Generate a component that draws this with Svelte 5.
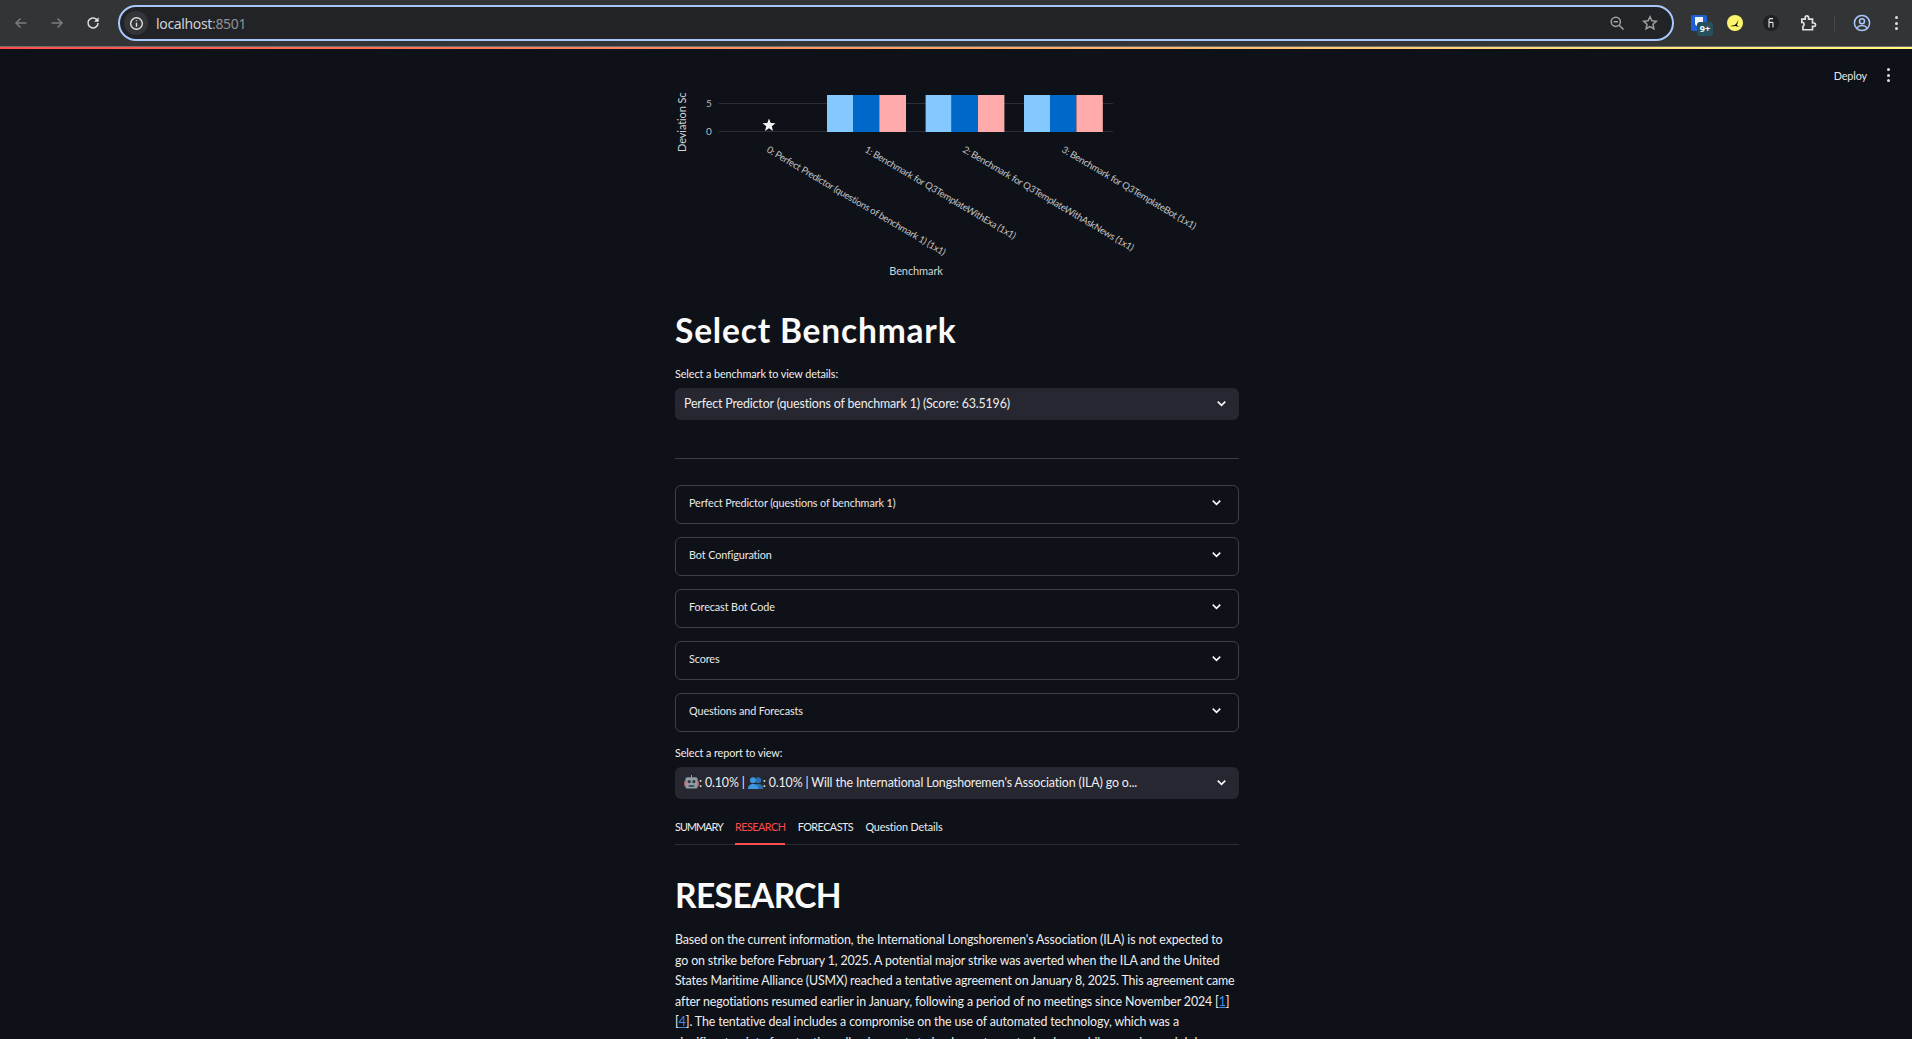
<script>
	const sans = 'Lato';

	const groups = [
		[827, 853, 879.3, 906],
		[925.6, 951.6, 978, 1004.4],
		[1024, 1050, 1076.4, 1102.8]
	];
	const barColors = ['#83c9ff', '#0068c9', '#ffabab'];
	const xLabels = [
		{ x: 766, text: '0: Perfect Predictor (questions of benchmark 1) (1x1)' },
		{ x: 864, text: '1: Benchmark for Q3TemplateWithExa (1x1)' },
		{ x: 962, text: '2: Benchmark for Q3TemplateWithAskNews (1x1)' },
		{ x: 1061, text: '3: Benchmark for Q3TemplateBot (1x1)' }
	];
	const expanders = [
		'Perfect Predictor (questions of benchmark 1)',
		'Bot Configuration',
		'Forecast Bot Code',
		'Scores',
		'Questions and Forecasts'
	];
	const tabs = [
		{ label: 'SUMMARY', cls: 'caps tight' },
		{ label: 'RESEARCH', cls: 'caps' },
		{ label: 'FORECASTS', cls: 'caps' },
		{ label: 'Question Details', cls: '' }
	];
	let activeTab = 1;
</script>

<div class="chrome">
	<div class="nav">
		<svg class="ic dim" viewBox="0 0 16 16"><path d="M13.5 8H3M7.5 3.5 3 8l4.5 4.5" /></svg>
		<svg class="ic dim" viewBox="0 0 16 16"><path d="M2.5 8H13M8.5 3.5 13 8l-4.5 4.5" /></svg>
		<svg class="ic lit" viewBox="0 0 16 16"><path d="M13 8a5 5 0 1 1-1.5-3.6L13 6" /><path class="fill" d="M13.6 2.2v4.6H9z" /></svg>
	</div>
	<div class="omnibox">
		<span class="info">
			<svg class="ic lit small" viewBox="0 0 16 16"><circle cx="8" cy="8" r="6.2" /><path d="M8 7.2V11.5M8 4.4v1.3" /></svg>
		</span>
		<span class="url">localhost<span class="port">:8501</span></span>
		<span class="omni-right">
			<svg class="ic soft" viewBox="0 0 16 16"><circle cx="6.8" cy="6.8" r="4.6" /><path d="M10.2 10.2 14.5 14.5M4.6 6.8h4.4" /></svg>
			<svg class="ic soft" viewBox="0 0 16 16"><path d="m8 1.8 1.9 4 4.4.5-3.3 3 .9 4.4L8 11.5l-3.9 2.2.9-4.4-3.3-3 4.4-.5z" /></svg>
		</span>
	</div>
	<div class="exts">
		<span class="ext-blue"><span class="ext-shield"></span><span class="badge">9+</span></span>
		<span class="ext-yellow">
			<svg viewBox="0 0 16 16"><path d="M11.2 2.8c.3 2.6-.8 5.300-3.300 7.100L3.400 11c1.800.3 3.700.2 5.100-.1 1.400.6 3 .8 4.300.5-1.300-.2-2.400-.7-2.900-1.500 1-1.900 1.500-4.400 1.300-7.100z" /></svg>
		</span>
		<span class="ext-dark">
			<svg viewBox="0 0 16 16"><path d="M10 3.600H7.400C6.500 3.600 6 4.200 6 5v7.500M6 7.400h3.300c.5 0 .7.300.7.800v4.300" /></svg>
		</span>
		<svg class="ic lit puzzle" viewBox="0 0 16 16"><path d="M2.500 4.500h3V3.200a1.500 1.500 0 0 1 3 0v1.300h3.500V8h1.200a1.500 1.500 0 0 1 0 3H12v3H3.500V11a2 2 0 0 0 0-3.500H2.500z" /></svg>
		<span class="sep"></span>
		<svg class="ic blue profile" viewBox="0 0 18 18"><circle cx="9" cy="9" r="7.6" /><circle cx="9" cy="7.2" r="2.5" /><path d="M3.800 14c1.400-1.800 3.200-2.500 5.200-2.500s3.800.7 5.200 2.500" /></svg>
		<span class="dots"><i></i><i></i><i></i></span>
	</div>
</div>
<div class="decoration"></div>

<div class="page" style="--sans: {sans}">
	<div class="deploy-bar">
		<span class="deploy">Deploy</span>
		<span class="kebab"><i></i><i></i><i></i></span>
	</div>

	<main class="column">
		<svg class="chart" viewBox="675 49 564 250">
			<line class="grid" x1="719" x2="1113" y1="103.5" y2="103.5" />
			<line class="grid" x1="719" x2="1113" y1="131.5" y2="131.5" />
			<text class="tick" x="709" y="107" text-anchor="middle">5</text>
			<text class="tick" x="709" y="135" text-anchor="middle">0</text>
			<text class="axis" transform="translate(686 152) rotate(-90)">Deviation Sc</text>
			<polygon class="star" points="769,118.5 770.7,123.1 775.5,123.3 771.8,126.3 773,131 769,128.3 765,131 766.2,126.3 762.5,123.3 767.3,123.1" />
			{#each groups as g}
				{#each barColors as color, i}
					<rect x={g[i]} y="95" width={g[i + 1] - g[i]} height="37" fill={color} />
				{/each}
			{/each}
			{#each xLabels as label}
				<text class="xlabel" transform="translate({label.x} 151.5) rotate(30.5)">{label.text}</text>
			{/each}
			<text class="axis" x="916" y="275" text-anchor="middle">Benchmark</text>
		</svg>

		<h1 class="head-select">Select Benchmark</h1>
		<div class="label">Select a benchmark to view details:</div>
		<div class="select">
			<span>Perfect Predictor (questions of benchmark 1) (Score: 63.5196)</span>
			<svg class="chev" viewBox="0 0 12 12"><path d="M3 4.5 6 7.5 9 4.5" /></svg>
		</div>
		<hr />

		<div class="expanders">
			{#each expanders as title}
				<div class="expander">
					<span>{title}</span>
					<svg class="chev" viewBox="0 0 12 12"><path d="M3 4.5 6 7.5 9 4.5" /></svg>
				</div>
			{/each}
		</div>

		<div class="label report-label">Select a report to view:</div>
		<div class="select">
			<span class="report-text">
				<svg class="emoji" viewBox="0 0 16 16">
					<rect x="7.5" y="0" width="1" height="3" fill="#9aa5ad" />
					<rect x="0" y="6.5" width="2.5" height="5.5" rx="1" fill="#c0555a" />
					<rect x="13.5" y="6.5" width="2.5" height="5.5" rx="1" fill="#c0555a" />
					<rect x="1.5" y="2.5" width="13" height="12" rx="2" fill="#8f9ca5" />
					<circle cx="5.5" cy="7" r="1.7" fill="#2f383f" />
					<circle cx="10.5" cy="7" r="1.7" fill="#2f383f" />
					<rect x="5" y="11" width="6" height="1.5" fill="#2f383f" />
				</svg>: 0.10% | <svg class="emoji" viewBox="0 0 16 16">
					<circle cx="11" cy="5.5" r="3.2" fill="#2a6fb0" />
					<path d="M5 15c0-4 2.500-5.500 6-5.500S16 11 16 15z" fill="#2a6fb0" />
					<circle cx="5.3" cy="5.5" r="3.2" fill="#3f97df" />
					<path d="M0 15c0-4 2.100-5.500 5.300-5.500S11 11 11 15z" fill="#3f97df" />
				</svg>: 0.10% | Will the International Longshoremen's Association (ILA) go o...
			</span>
			<svg class="chev" viewBox="0 0 12 12"><path d="M3 4.5 6 7.5 9 4.5" /></svg>
		</div>

		<div class="tabs">
			{#each tabs as tab, i}
				<span class="tab {tab.cls}" class:active={i === activeTab}>{tab.label}</span>
			{/each}
		</div>

		<h1 class="head-research">RESEARCH</h1>
		<p>
			Based on the current information, the International Longshoremen's Association (ILA) is not expected to<br />
			go on strike before February 1, 2025. A potential major strike was averted when the ILA and the United<br />
			States Maritime Alliance (USMX) reached a tentative agreement on January 8, 2025. This agreement came<br />
			after negotiations resumed earlier in January, following a period of no meetings since November 2024 [<a href="#1">1</a>]<br />
			[<a href="#4">4</a>]. The tentative deal includes a compromise on the use of automated technology, which was a<br />
			significant point of contention, allowing ports to implement new technology while ensuring no job losses.
		</p>
	</main>
</div>

<style>
	:global(body) {
		margin: 0;
		height: 1039px;
		overflow: hidden;
		background: #0e1117;
	}

	.chrome {
		height: 46px;
		background: #333435;
		display: flex;
		align-items: center;
		font-family: 'Noto Sans', sans-serif;
		box-sizing: border-box;
	}

	.nav {
		display: flex;
		gap: 20px;
		width: 118px;
		box-sizing: border-box;
		padding-left: 13px;
	}

	.ic {
		width: 16px;
		height: 16px;
		fill: none;
		stroke-width: 1.5;
	}

	.ic.dim { stroke: #7b7c7e; }
	.ic.lit { stroke: #dfe0e2; }
	.ic.soft { stroke: #a0a1a3; }
	.ic.blue { stroke: #a8c7fa; }
	.ic .fill { fill: #dfe0e2; stroke: none; }
	.ic.small { width: 15px; height: 15px; }

	.omnibox {
		width: 1556px;
		height: 36px;
		box-sizing: border-box;
		border: 2px solid #a8c7fa;
		border-radius: 18px;
		background: #222326;
		display: flex;
		align-items: center;
		padding: 0 14px 0 4px;
	}

	.info {
		width: 24px;
		height: 24px;
		border-radius: 50%;
		background: #333538;
		display: flex;
		align-items: center;
		justify-content: center;
	}

	.url {
		margin-left: 8px;
		font-size: 14px;
		color: #d0d1d4;
		letter-spacing: -0.35px;
	}

	.port { color: #8f9094; }

	.omni-right {
		margin-left: auto;
		display: flex;
		gap: 17px;
	}

	.exts {
		flex: 1;
		display: flex;
		align-items: center;
		padding-left: 17px;
		height: 100%;
	}

	.ext-blue {
		position: relative;
		width: 16px;
		height: 16px;
		background: #1f5fd6;
		border-radius: 2px;
		display: flex;
		justify-content: center;
	}

	.ext-shield {
		width: 8px;
		height: 9px;
		margin-top: 2px;
		background: #f0f4ff;
		border-radius: 0 0 3px 3px;
	}

	.badge {
		position: absolute;
		left: 6px;
		top: 7px;
		width: 16px;
		height: 14px;
		background: #27505f;
		color: #fff;
		border-radius: 3px;
		font-size: 9px;
		font-weight: 700;
		line-height: 14px;
		text-align: center;
	}

	.ext-yellow {
		margin-left: 20px;
		width: 16px;
		height: 16px;
		border-radius: 50%;
		background: #fdf56b;
		display: flex;
	}

	.ext-yellow svg { width: 16px; height: 16px; fill: #111; }

	.ext-dark {
		margin-left: 20px;
		width: 16px;
		height: 16px;
		border-radius: 50%;
		background: #202123;
		display: flex;
	}

	.ext-dark svg {
		width: 16px;
		height: 16px;
		fill: none;
		stroke: #e4e4e4;
		stroke-width: 1.1;
	}

	.puzzle { margin-left: 20px; width: 18px; height: 18px; }

	.sep {
		margin-left: 17px;
		width: 1px;
		height: 16px;
		background: #47484a;
	}

	.profile { margin-left: 18px; width: 18px; height: 18px; }

	.dots, .kebab {
		display: inline-flex;
		flex-direction: column;
		gap: 2.5px;
	}

	.dots { margin-left: 24px; }

	.dots i, .kebab i {
		display: block;
		width: 3px;
		height: 3px;
		border-radius: 50%;
		background: #dfe0e2;
	}

	.decoration {
		height: 3px;
		background: linear-gradient(90deg, #ff4b4b, #fffd80);
		border-top: 1px solid #6d6d6d;
		box-sizing: border-box;
	}

	.page {
		position: relative;
		padding-left: 2px;
		font-family: var(--sans), 'Liberation Sans', sans-serif;
		color: #fafafa;
	}

	.deploy-bar {
		position: absolute;
		top: 19px;
		right: 22px;
		display: flex;
		align-items: center;
		gap: 20px;
		font-size: 10.8px;
	}

	.deploy { color: #e6e6e6; letter-spacing: -0.1px; }

	.column {
		width: 564px;
		margin: 0 auto;
	}

	.chart {
		display: block;
		width: 564px;
		height: 250px;
	}

	.grid { stroke: #2b2e36; stroke-width: 1; }
	.tick { fill: #b8bcc2; font-size: 10px; }
	.axis { fill: #d3d5d9; font-size: 11px; letter-spacing: -0.1px; }
	.xlabel { fill: #c0c3c8; font-size: 9.6px; letter-spacing: -0.3px; }
	.star { fill: #f4f5f7; }

	h1 {
		margin: 0;
		font-weight: 700;
		line-height: 1.2;
		color: #fafafa;
	}

	.head-select {
		font-size: 33.5px;
		letter-spacing: 0.82px;
		margin-top: 11px;
		height: 42px;
	}

	.label {
		font-size: 10.8px;
		line-height: 16px;
		margin-top: 14px;
		color: #f0f0f2;
		letter-spacing: -0.08px;
	}

	.select {
		margin-top: 6px;
		height: 32px;
		background: #262730;
		border-radius: 6px;
		display: flex;
		align-items: center;
		justify-content: space-between;
		padding: 0 10px 1px 9px;
		box-sizing: border-box;
		font-size: 12.4px;
		color: #eeeef0;
		letter-spacing: -0.14px;
	}

	.report-text {
		display: inline-flex;
		align-items: center;
		white-space: pre;
	}

	.emoji {
		width: 15px;
		height: 15px;
	}

	.chev {
		width: 15px;
		height: 15px;
		fill: none;
		stroke: #fafafa;
		stroke-width: 1.3;
		flex: none;
	}

	hr {
		margin: 38px 0 26px;
		border: 0;
		border-top: 1px solid #3a3d45;
	}

	.expanders {
		display: flex;
		flex-direction: column;
		gap: 13.5px;
	}

	.expander {
		height: 38.5px;
		box-sizing: border-box;
		border: 1px solid #3c3f47;
		border-radius: 6px;
		display: flex;
		align-items: center;
		justify-content: space-between;
		padding: 0 14px 4px 13px;
		font-size: 10.8px;
		color: #e9e9eb;
		letter-spacing: -0.1px;
	}

	.report-label { margin-top: 13px; }

	.tabs {
		display: flex;
		gap: 12.2px;
		margin-top: 17px;
		height: 28px;
		border-bottom: 1px solid #2a2d35;
		font-size: 10.8px;
		letter-spacing: -0.13px;
	}

	.tab {
		height: 29px;
		line-height: 21px;
		box-sizing: border-box;
		color: #eceded;
	}

	.tab.caps { letter-spacing: -0.5px; }
	.tab.tight { letter-spacing: -0.95px; }

	.tab.active {
		color: #ff4b4b;
		border-bottom: 2px solid #ff4b4b;
	}

	.head-research {
		font-size: 33.5px;
		letter-spacing: -0.6px;
		margin-top: 30px;
		height: 42px;
	}

	p {
		margin: 13.5px 0 0;
		font-size: 12.4px;
		line-height: 20.5px;
		color: #eeeef0;
		letter-spacing: -0.13px;
		white-space: nowrap;
	}

	a { color: #3b8ee8; }
</style>
